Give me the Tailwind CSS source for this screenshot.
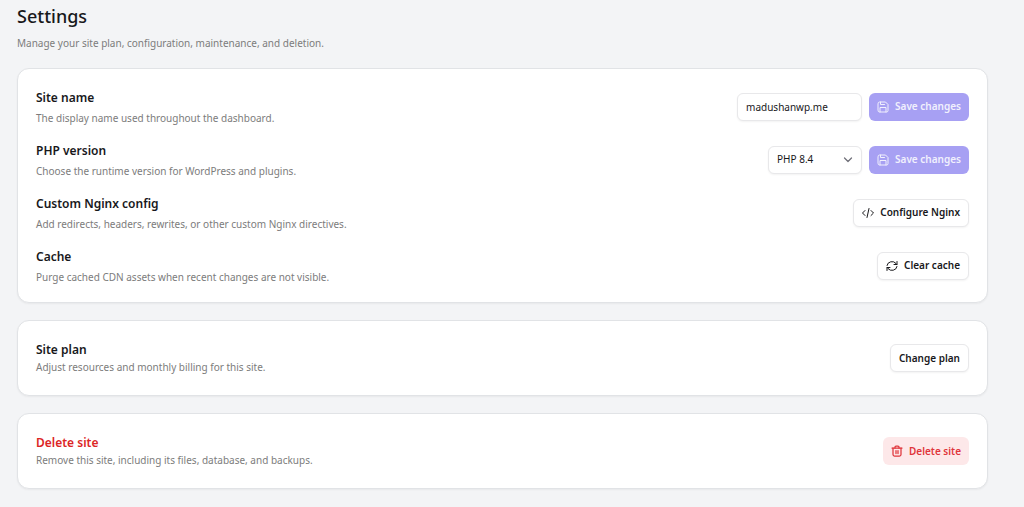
<!DOCTYPE html>
<html lang="en">
<head>
    <meta charset="UTF-8">
    <meta name="viewport" content="width=device-width, initial-scale=1.0">
    <title>Settings</title>
    <script src="https://cdn.jsdelivr.net/npm/@tailwindcss/browser@4"></script>
</head>
<body class="min-h-screen bg-[#f3f4f6] font-['Noto_Sans',sans-serif] text-[#18181b]">
    <main class="pl-[17px] pr-9 pt-1 pb-4">
        <!-- Page header -->
        <header class="mb-[17px]">
            <h1 class="text-lg leading-6 font-medium">Settings</h1>
            <p class="mt-[7px] text-[10px] leading-4 text-[#7c7c7c]">Manage your site plan, configuration, maintenance, and deletion.</p>
        </header>

        <div class="flex flex-col gap-[17px]">
            <!-- General settings -->
            <section class="flex flex-col gap-3.5 rounded-xl border border-[#e1e3e6] bg-white px-[18px] pt-[18px] pb-[17px] shadow-xs">
                <div class="flex items-center justify-between">
                    <div class="pt-px">
                        <label for="site-name" class="block text-xs leading-5 font-semibold">Site name</label>
                        <p class="mt-0.5 text-[10px] leading-4 text-[#7c7c7c]">The display name used throughout the dashboard.</p>
                    </div>
                    <form class="flex items-center gap-[7px]">
                        <input id="site-name" type="text" value="madushanwp.me" class="h-7 w-[125px] rounded-md border border-[#e8e8ea] bg-white px-2 text-[10px] shadow-xs">
                        <button type="button" disabled class="flex h-7 items-center gap-1.5 rounded-md bg-[#a7a0f3] px-2 text-[10px] font-semibold text-[#f1f0fd]">
                            <svg class="size-3" viewBox="0 0 24 24" fill="none" stroke="currentColor" stroke-width="2" stroke-linecap="round" stroke-linejoin="round"><path d="M2 5a3 3 0 0 1 3-3h12l5 5v12a3 3 0 0 1-3 3H5a3 3 0 0 1-3-3z"/><path d="M7 2v5h8"/><path d="M6 22v-9h12v9"/></svg>
                            Save changes
                        </button>
                    </form>
                </div>

                <div class="flex items-center justify-between">
                    <div class="pt-px">
                        <label for="php-version" class="block text-xs leading-5 font-semibold">PHP version</label>
                        <p class="mt-0.5 text-[10px] leading-4 text-[#7c7c7c]">Choose the runtime version for WordPress and plugins.</p>
                    </div>
                    <form class="flex items-center gap-[7px]">
                        <div class="relative">
                            <select id="php-version" class="block h-7 w-[94px] appearance-none rounded-md border border-[#e8e8ea] bg-white px-2 text-[10px] shadow-xs">
                                <option>PHP 8.4</option>
                            </select>
                            <svg class="pointer-events-none absolute top-2 right-2 size-3 text-[#71717a]" viewBox="0 0 24 24" fill="none" stroke="currentColor" stroke-width="2.5" stroke-linecap="round" stroke-linejoin="round"><path d="m5 8 7 7 7-7"/></svg>
                        </div>
                        <button type="button" disabled class="flex h-7 items-center gap-1.5 rounded-md bg-[#a7a0f3] px-2 text-[10px] font-semibold text-[#f1f0fd]">
                            <svg class="size-3" viewBox="0 0 24 24" fill="none" stroke="currentColor" stroke-width="2" stroke-linecap="round" stroke-linejoin="round"><path d="M2 5a3 3 0 0 1 3-3h12l5 5v12a3 3 0 0 1-3 3H5a3 3 0 0 1-3-3z"/><path d="M7 2v5h8"/><path d="M6 22v-9h12v9"/></svg>
                            Save changes
                        </button>
                    </form>
                </div>

                <div class="flex items-center justify-between">
                    <div class="pt-px">
                        <h2 class="text-xs leading-5 font-semibold">Custom Nginx config</h2>
                        <p class="mt-0.5 text-[10px] leading-4 text-[#7c7c7c]">Add redirects, headers, rewrites, or other custom Nginx directives.</p>
                    </div>
                    <button type="button" class="flex h-7 items-center gap-1.5 rounded-md border border-[#e8e8ea] bg-white px-2 text-[10px] font-semibold shadow-xs">
                        <svg class="size-3" viewBox="0 0 24 24" fill="none" stroke="currentColor" stroke-width="2" stroke-linecap="round" stroke-linejoin="round"><path d="m6 7-5 5 5 5"/><path d="m18 7 5 5-5 5"/><path d="m14 3-4 18"/></svg>
                        Configure Nginx
                    </button>
                </div>

                <div class="flex items-center justify-between">
                    <div class="pt-px">
                        <h2 class="text-xs leading-5 font-semibold">Cache</h2>
                        <p class="mt-0.5 text-[10px] leading-4 text-[#7c7c7c]">Purge cached CDN assets when recent changes are not visible.</p>
                    </div>
                    <button type="button" class="flex h-7 items-center gap-1.5 rounded-md border border-[#e8e8ea] bg-white px-2 text-[10px] font-semibold shadow-xs">
                        <svg class="size-3" viewBox="0 0 24 24" fill="none" stroke="currentColor" stroke-width="2" stroke-linecap="round" stroke-linejoin="round"><path d="M2 11a10 9 0 0 1 18-4l2 2"/><path d="M22 3v6h-6"/><path d="M22 13a10 9 0 0 1-18 4l-2-2"/><path d="M2 21v-6h6"/></svg>
                        Clear cache
                    </button>
                </div>
            </section>

            <!-- Plan -->
            <section class="flex items-center justify-between rounded-xl border border-[#e1e3e6] bg-white px-[18px] py-5 shadow-xs">
                <div>
                    <h2 class="text-xs leading-[18px] font-semibold">Site plan</h2>
                    <p class="text-[10px] leading-4 text-[#7c7c7c]">Adjust resources and monthly billing for this site.</p>
                </div>
                <button type="button" class="h-7 rounded-md border border-[#e8e8ea] bg-white px-2 text-[10px] font-semibold shadow-xs">Change plan</button>
            </section>

            <!-- Danger zone -->
            <section class="flex items-center justify-between rounded-xl border border-[#e1e3e6] bg-white px-[18px] py-5 shadow-xs">
                <div>
                    <h2 class="text-xs leading-[18px] font-semibold text-[#dc2626]">Delete site</h2>
                    <p class="text-[10px] leading-4 text-[#7c7c7c]">Remove this site, including its files, database, and backups.</p>
                </div>
                <button type="button" class="flex h-7 items-center gap-1.5 rounded-md bg-[#fde8e9] px-2 text-[10px] font-semibold text-[#e0353b]">
                    <svg class="size-3" viewBox="0 0 24 24" fill="none" stroke="currentColor" stroke-width="2.5" stroke-linecap="round" stroke-linejoin="round"><path d="M2 6h20"/><path d="M4 6v13a3 3 0 0 0 3 3h10a3 3 0 0 0 3-3V6"/><path d="M8 6V4a2 2 0 0 1 2-2h4a2 2 0 0 1 2 2v2"/><path d="M10 11v6M14 11v6"/></svg>
                    Delete site
                </button>
            </section>
        </div>
    </main>
</body>
</html>
